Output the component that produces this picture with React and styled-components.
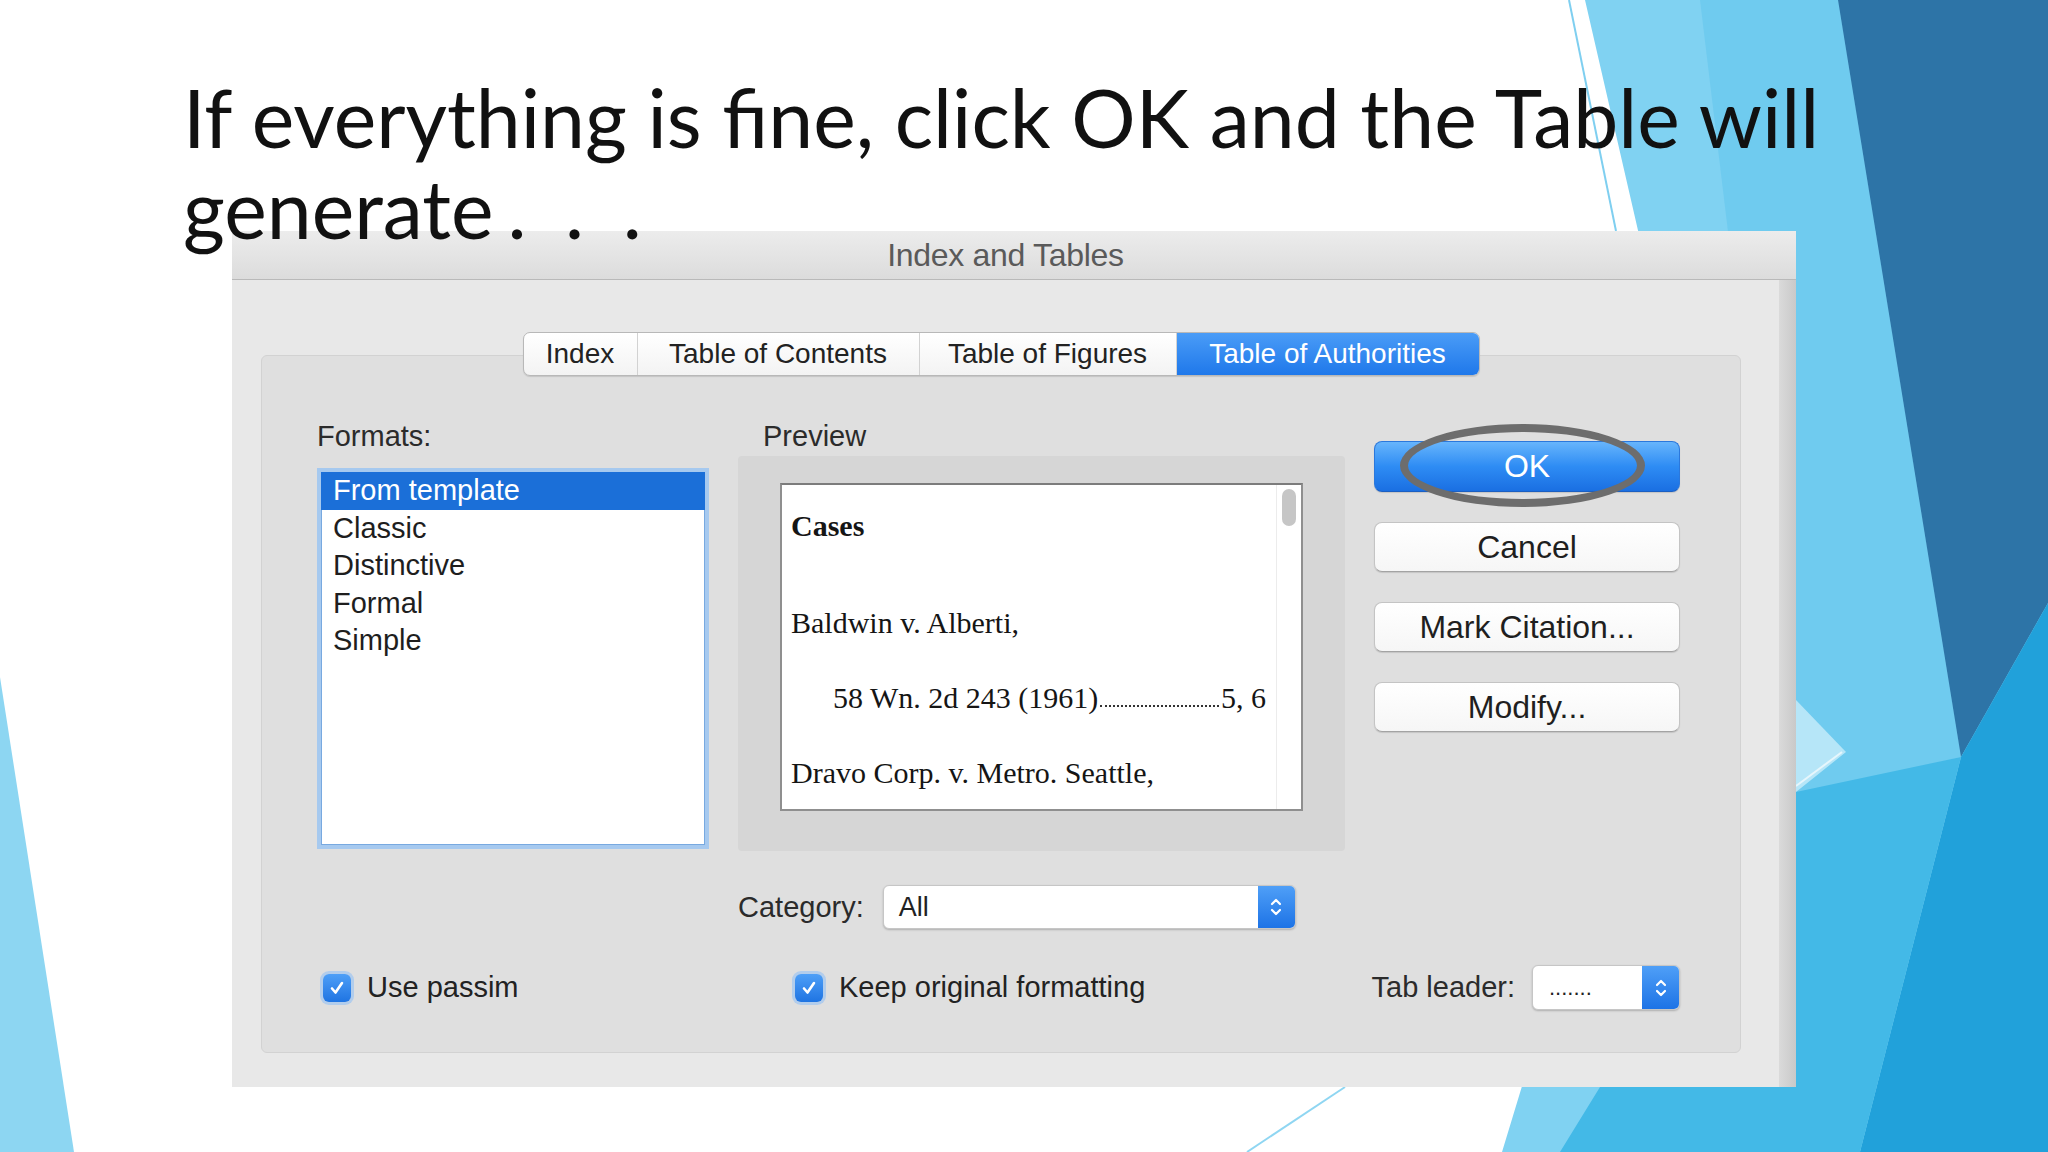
import React from "react";
import styled, { createGlobalStyle } from "styled-components";

const GlobalStyle = createGlobalStyle`
  html, body {
    margin: 0;
    padding: 0;
  }
  body {
    width: 2048px;
    height: 1152px;
    overflow: hidden;
    background: #fff;
  }
`;

const UI_FONT = `"Liberation Sans", Arial, Helvetica, sans-serif`;

const Slide = styled.div`
  position: relative;
  width: 2048px;
  height: 1152px;
  overflow: hidden;
  background: #ffffff;
  display: flex;
  flex-direction: column;
`;

// slide decoration (facet triangles), drawn behind everything
const Backdrop = styled.svg`
  position: absolute;
  inset: 0;
  width: 100%;
  height: 100%;
  z-index: 0;
`;

const Title = styled.h1`
  position: relative;
  z-index: 2;
  margin: 0;
  padding: 72px 0 0 183px;
  font-family: "Lato", "Open Sans", sans-serif;
  font-weight: 400;
  font-size: 80.5px;
  line-height: 91px;
  color: #111;
  white-space: nowrap;
`;

const Dots = styled.span`
  word-spacing: 18px;
  margin-left: 14px;
`;

const Dialog = styled.div`
  position: relative;
  z-index: 1;
  box-sizing: border-box;
  margin: -23px 0 0 232px;
  width: 1564px;
  height: 856px;
  display: flex;
  flex-direction: column;
  font-family: ${UI_FONT};
  background: linear-gradient(
    to right,
    #e8e8e8 calc(100% - 17px),
    #dadada calc(100% - 17px),
    #c9c9c9 100%
  );
`;

const TitleBar = styled.div`
  height: 49px;
  box-sizing: border-box;
  display: flex;
  align-items: center;
  justify-content: center;
  padding-right: 17px;
  background: linear-gradient(#ececec, #dcdcdc);
  border-bottom: 1px solid #b9b9b9;
  color: #5a5a5a;
  font-size: 32px;
  letter-spacing: -0.3px;
`;

const Body = styled.div`
  flex: 1;
  display: flex;
  flex-direction: column;
  padding: 52px 55px 34px 29px;
`;

const Tabs = styled.div`
  position: relative;
  z-index: 1;
  align-self: center;
  display: flex;
  height: 44px;
  box-sizing: border-box;
  border: 1px solid #b8b8b8;
  border-radius: 7px;
  background: linear-gradient(#ffffff, #f3f3f3);
  box-shadow: 0 1px 1px rgba(0, 0, 0, 0.12);
`;

const Tab = styled.div`
  width: ${(p) => p.w}px;
  display: flex;
  align-items: center;
  justify-content: center;
  font-size: 28px;
  color: ${(p) => (p.active ? "#fff" : "#222")};
  border-left: ${(p) => (p.first ? "none" : "1px solid #d2d2d2")};
  background: ${(p) =>
    p.active ? "linear-gradient(#4a9cf7, #1f78ea)" : "transparent"};
  border-radius: ${(p) => (p.active ? "0 6px 6px 0" : p.first ? "6px 0 0 6px" : "0")};
`;

const Panel = styled.div`
  flex: 1;
  margin-top: -21px;
  box-sizing: border-box;
  background: #dfdfdf;
  border: 1px solid #d2d2d2;
  border-radius: 6px;
  padding: 64px 58px 0 55px;
  display: flex;
  flex-direction: column;
`;

const Columns = styled.div`
  display: grid;
  grid-template-columns: 392px 607px 306px;
  column-gap: 29px;
  align-items: ${(p) => p.align || "start"};
  margin-top: ${(p) => p.top || 0}px;
`;

const Col = styled.div`
  display: flex;
  flex-direction: column;
  min-width: 0;
`;

const Label = styled.div`
  font-size: 29px;
  line-height: 33px;
  color: #2b2b2b;
  white-space: nowrap;
  padding-left: ${(p) => p.indent || 0}px;
`;

const ListBox = styled.div`
  margin-top: 15px;
  height: 381px;
  box-sizing: border-box;
  background: #fff;
  border: 4px solid #a6c9ef;
  box-shadow: inset 0 0 0 1px #78a9e0;
`;

const ListRow = styled.div`
  height: 37.5px;
  display: flex;
  align-items: center;
  padding-left: 12px;
  font-size: 29px;
  color: ${(p) => (p.selected ? "#fff" : "#1e1e1e")};
  background: ${(p) => (p.selected ? "#1b6fd8" : "transparent")};
`;

const Well = styled.div`
  margin-top: 3px;
  height: 395px;
  box-sizing: border-box;
  background: #d6d6d6;
  border-radius: 4px;
  padding: 27px 42px 40px 42px;
  display: flex;
`;

const Paper = styled.div`
  flex: 1;
  min-width: 0;
  display: flex;
  background: #fff;
  border: 2px solid #8f8f8f;
  border-top-color: #7c7c7c;
`;

const PaperText = styled.div`
  flex: 1;
  min-width: 0;
  padding: 3px 10px 0 9px;
  font-family: "Liberation Serif", "Times New Roman", serif;
  font-size: 30px;
  color: #151515;
`;

const PaperLine = styled.div`
  display: flex;
  white-space: nowrap;
  line-height: 75px;
  padding-left: ${(p) => p.indent || 0}px;
  font-weight: ${(p) => (p.bold ? 700 : 400)};
  margin-bottom: ${(p) => p.gap || 0}px;
`;

// dotted tab leader between citation and page numbers
const Leader = styled.span`
  flex: 1;
  align-self: flex-end;
  height: 0;
  margin: 0 2px 28px 2px;
  border-bottom: 2px dotted #333;
`;

const ScrollTrack = styled.div`
  width: 24px;
  flex: none;
  border-left: 1px solid #ececec;
  display: flex;
  justify-content: center;
`;

const Thumb = styled.div`
  width: 14px;
  height: 37px;
  margin-top: 4px;
  border-radius: 7px;
  background: #c6c6c6;
`;

const FieldRow = styled.div`
  display: flex;
  align-items: center;
  gap: ${(p) => p.gap || 19}px;
  margin-top: ${(p) => p.top || 0}px;
  justify-content: ${(p) => p.justify || "flex-start"};
  padding-left: ${(p) => p.indent || 0}px;
`;

const Select = styled.div`
  width: ${(p) => p.w}px;
  height: ${(p) => p.h}px;
  flex: none;
  box-sizing: border-box;
  display: flex;
  background: #fff;
  border: 1px solid #c6c6c6;
  border-radius: 6px;
  box-shadow: 0 1px 2px rgba(0, 0, 0, 0.22);
  overflow: hidden;
`;

const SelectValue = styled.div`
  flex: 1;
  display: flex;
  align-items: center;
  padding-left: ${(p) => p.indent || 14}px;
  font-size: ${(p) => p.size || 27}px;
  color: #222;
`;

const Stepper = styled.div`
  width: 37px;
  display: flex;
  align-items: center;
  justify-content: center;
  background: linear-gradient(#4f9ff7, #1d73e6);
`;

const Buttons = styled.div`
  display: flex;
  flex-direction: column;
  gap: 30px;
  padding-top: 21px;
`;

const ButtonSlot = styled.div`
  position: relative;
`;

const Button = styled.div`
  height: ${(p) => (p.primary ? 51 : 50)}px;
  box-sizing: border-box;
  display: flex;
  align-items: center;
  justify-content: center;
  border-radius: 8px;
  font-size: 32px;
  color: ${(p) => (p.primary ? "#fff" : "#1f1f1f")};
  background: ${(p) =>
    p.primary
      ? "linear-gradient(#67b5fc, #2e8cf4 50%, #1a6fe2)"
      : "linear-gradient(#ffffff, #f6f6f6)"};
  border: 1px solid ${(p) => (p.primary ? "#2b78dc" : "#c4c4c4")};
  border-bottom-color: ${(p) => (p.primary ? "#1b5fc2" : "#a3a3a3")};
  box-shadow: 0 1px 1px rgba(0, 0, 0, 0.12);
`;

// hand-drawn annotation ring around OK
const Ring = styled.div`
  position: absolute;
  left: 26px;
  top: -17px;
  width: 245px;
  height: 83px;
  box-sizing: border-box;
  border: 8px solid #6d6d6d;
  border-radius: 50%;
  pointer-events: none;
`;

const Check = styled.div`
  width: 28px;
  height: 28px;
  flex: none;
  box-sizing: border-box;
  border-radius: 6px;
  display: flex;
  align-items: center;
  justify-content: center;
  background: linear-gradient(#4e9ff7, #1f74e2);
  box-shadow: 0 0 0 3px rgba(140, 190, 245, 0.55);
`;

const CheckText = styled.span`
  font-size: 29px;
  color: #222;
  white-space: nowrap;
`;

const Chevrons = () => (
  <svg width="14" height="24" viewBox="0 0 14 24">
    <path d="M3 9 L7 5 L11 9" fill="none" stroke="#fff" strokeWidth="2.2" strokeLinecap="round" strokeLinejoin="round" />
    <path d="M3 15 L7 19 L11 15" fill="none" stroke="#fff" strokeWidth="2.2" strokeLinecap="round" strokeLinejoin="round" />
  </svg>
);

const Tick = () => (
  <svg width="18" height="18" viewBox="0 0 18 18">
    <path d="M4 9.5 L7.5 13.5 L14 4" fill="none" stroke="#fff" strokeWidth="2.6" strokeLinecap="round" strokeLinejoin="round" />
  </svg>
);

const Facets = () => (
  <Backdrop viewBox="0 0 2048 1152" preserveAspectRatio="none">
    <polygon points="0,677 74,1152 0,1152" fill="#8dd6f2" />
    <polygon points="1585,0 2048,0 2048,1152 1502,1152 1700,500" fill="#80d2f2" />
    <polygon points="1700,0 1838,0 1961,757 1796,795" fill="#6fcbef" />
    <polygon points="1796,700 1846,752 1796,792" fill="#b6e6f8" />
    <polygon points="1838,0 2048,0 2048,603 1961,757" fill="#2d74a7" />
    <polygon points="1961,757 2048,603 2048,1152 1860,1152" fill="#21a1da" />
    <polygon points="1796,792 1961,757 1860,1152 1560,1152 1600,1087 1796,1087" fill="#43b9e7" />
    <line x1="1569" y1="0" x2="1616" y2="231" stroke="#7fcff0" strokeWidth="2" />
    <line x1="1247" y1="1152" x2="1345" y2="1087" stroke="#8fd6f2" strokeWidth="2" />
    <line x1="1796" y1="786" x2="1842" y2="752" stroke="#e6f6fc" strokeWidth="2" />
  </Backdrop>
);

const formats = ["From template", "Classic", "Distinctive", "Formal", "Simple"];

export default function App() {
  return (
    <Slide>
      <GlobalStyle />
      <Facets />
      <Title>
        If everything is fine, click OK and the Table will
        <br />
        generate<Dots>. . .</Dots>
      </Title>
      <Dialog>
        <TitleBar>Index and Tables</TitleBar>
        <Body>
          <Tabs>
            <Tab w={113} first>Index</Tab>
            <Tab w={281}>Table of Contents</Tab>
            <Tab w={256}>Table of Figures</Tab>
            <Tab w={302} active>Table of Authorities</Tab>
          </Tabs>
          <Panel>
            <Columns>
              <Col>
                <Label>Formats:</Label>
                <ListBox>
                  {formats.map((f, i) => (
                    <ListRow key={f} selected={i === 0}>{f}</ListRow>
                  ))}
                </ListBox>
              </Col>
              <Col>
                <Label indent={25}>Preview</Label>
                <Well>
                  <Paper>
                    <PaperText>
                      <PaperLine bold gap={22}>Cases</PaperLine>
                      <PaperLine>Baldwin v. Alberti,</PaperLine>
                      <PaperLine indent={42}>
                        <span>58 Wn. 2d 243 (1961)</span>
                        <Leader />
                        <span>5, 6</span>
                      </PaperLine>
                      <PaperLine>Dravo Corp. v. Metro. Seattle,</PaperLine>
                    </PaperText>
                    <ScrollTrack>
                      <Thumb />
                    </ScrollTrack>
                  </Paper>
                </Well>
                <FieldRow top={34}>
                  <Label>Category:</Label>
                  <Select w={413} h={44}>
                    <SelectValue indent={15}>All</SelectValue>
                    <Stepper>
                      <Chevrons />
                    </Stepper>
                  </Select>
                </FieldRow>
              </Col>
              <Buttons>
                <ButtonSlot>
                  <Button primary>OK</Button>
                  <Ring />
                </ButtonSlot>
                <Button>Cancel</Button>
                <Button>Mark Citation...</Button>
                <Button>Modify...</Button>
              </Buttons>
            </Columns>
            <Columns align="center" top={36}>
              <FieldRow gap={16} indent={6}>
                <Check>
                  <Tick />
                </Check>
                <CheckText>Use passim</CheckText>
              </FieldRow>
              <FieldRow gap={16} indent={57}>
                <Check>
                  <Tick />
                </Check>
                <CheckText>Keep original formatting</CheckText>
              </FieldRow>
              <FieldRow gap={17} justify="flex-end">
                <Label>Tab leader:</Label>
                <Select w={148} h={45}>
                  <SelectValue indent={16} size={22}>.......</SelectValue>
                  <Stepper>
                    <Chevrons />
                  </Stepper>
                </Select>
              </FieldRow>
            </Columns>
          </Panel>
        </Body>
      </Dialog>
    </Slide>
  );
}
